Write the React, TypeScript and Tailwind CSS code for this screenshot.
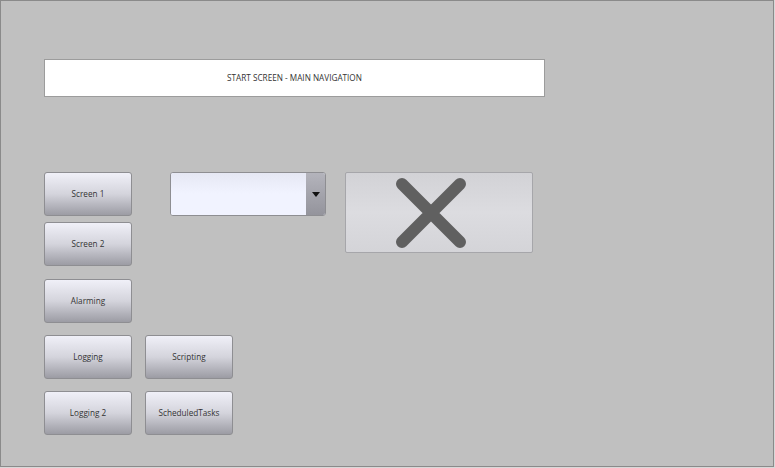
import React from "react";

const font = { fontFamily: '"Open Sans", "Noto Sans", sans-serif' };

function Btn({ label }: { label: string }) {
  return (
    <div className="flex h-[44px] w-[88px] items-center justify-center rounded-[3px] border border-[#8e8e92] bg-gradient-to-b from-[#f0f0f8] via-[#d4d4dc] to-[#9c9ca4] text-[8.2px] text-[#333]">
      {label}
    </div>
  );
}

export default function App() {
  return (
    <div className="h-[468px] w-[775px] bg-[#d8d8d8]" style={font}>
      <div className="flex h-[467px] w-[774px] flex-col border border-[#8a8a8a] bg-[#c0c0c0] pl-[43px] pt-[58px]">
        <div className="flex h-[38px] w-[501px] items-center justify-center border border-[#9c9c9c] bg-white text-[8.2px] text-[#333]">
          START SCREEN - MAIN NAVIGATION
        </div>
        <div className="mt-[75px] flex items-start">
          <div className="flex flex-col gap-[6px]">
            <Btn label="Screen 1" />
            <Btn label="Screen 2" />
          </div>
          <div className="ml-[38px] flex h-[44px] w-[156px] overflow-hidden rounded-[3px] border border-[#8e8e92] bg-[#f1f3ff]">
            <div className="flex-1 bg-gradient-to-b from-[#e6e8f4] via-[#f1f3ff] to-[#f1f3ff]" />
            <div className="flex w-[19px] items-center justify-center bg-gradient-to-b from-[#b4b4bc] to-[#94949c]">
              <svg width="8" height="5" viewBox="0 0 8 5">
                <path d="M0 0 H8 L4 5 Z" fill="#111" />
              </svg>
            </div>
          </div>
          <div className="ml-[19px] flex h-[81px] w-[188px] items-center justify-center rounded-[2px] border border-[#a6a6aa] bg-gradient-to-b from-[#d2d2d6] via-[#dcdce0] to-[#d4d4d8] pr-[17px]">
            <svg width="72" height="72" viewBox="0 0 72 72">
              <path d="M7 7 L65 65 M65 7 L7 65" stroke="#606060" strokeWidth="12" strokeLinecap="round" />
            </svg>
          </div>
        </div>
        <div className="mt-[13px]">
          <Btn label="Alarming" />
        </div>
        <div className="mt-[12px] flex gap-[13px]">
          <Btn label="Logging" />
          <Btn label="Scripting" />
        </div>
        <div className="mt-[12px] flex gap-[13px]">
          <Btn label="Logging 2" />
          <Btn label="ScheduledTasks" />
        </div>
      </div>
    </div>
  );
}
